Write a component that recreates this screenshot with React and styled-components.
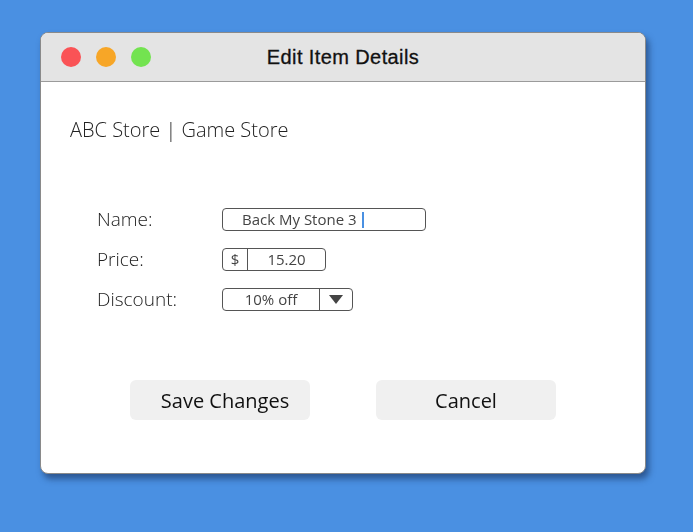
import React from 'react'
import styled, { createGlobalStyle } from 'styled-components'

const GlobalStyle = createGlobalStyle`
  html, body {
    margin: 0;
    padding: 0;
    background: #4a90e2;
  }
  body {
    font-family: 'Open Sans', 'Liberation Sans', sans-serif;
    -webkit-font-smoothing: antialiased;
  }
`

const Page = styled.div`
  width: 693px;
  height: 532px;
  padding: 32px 0 0 40px;
  box-sizing: border-box;
`

const Window = styled.div`
  width: 606px;
  height: 442px;
  box-sizing: border-box;
  background: #fff;
  border: 1px solid #8a8a8a;
  border-radius: 8px;
  overflow: hidden;
  box-shadow: 3px 5px 6px rgba(20, 40, 80, 0.55);
  display: flex;
  flex-direction: column;
`

const TitleBar = styled.div`
  height: 48px;
  flex: none;
  background: #e4e4e4;
  border-bottom: 1px solid #9b9b9b;
  display: grid;
  grid-template-columns: 1fr auto 1fr;
  align-items: center;
`

const Lights = styled.div`
  display: flex;
  gap: 15px;
  padding-left: 20px;
`

const Light = styled.span`
  width: 20px;
  height: 20px;
  border-radius: 50%;
  background: ${({ color }) => color};
`

const Title = styled.div`
  font-family: 'Liberation Sans', Arial, sans-serif;
  font-size: 20px;
  letter-spacing: 0.4px;
  color: #111;
  -webkit-text-stroke: 0.3px #111;
`

const Body = styled.div`
  padding: 34px 0 0 29px;
  will-change: transform;
`

const Store = styled.div`
  font-size: 20px;
  font-weight: 300;
  color: #222;
  line-height: 28px;
`

const Form = styled.div`
  margin: 64px 0 0 27px;
  display: grid;
  grid-template-columns: 125px auto;
  row-gap: 17px;
  align-items: center;
  justify-items: start;
`

const Label = styled.div`
  font-size: 19px;
  font-weight: 300;
  color: #222;
  line-height: 23px;
`

const Field = styled.div`
  display: flex;
  align-items: stretch;
  width: ${({ w }) => w}px;
  height: 23px;
  box-sizing: border-box;
  border: 1px solid #555;
  border-radius: 4px;
  font-size: 15px;
  color: #444;
  line-height: 21px;
`

const Cell = styled.div`
  flex: ${({ grow }) => (grow ? 1 : 'none')};
  width: ${({ w }) => (w ? `${w}px` : 'auto')};
  padding-left: ${({ pad }) => pad || 0}px;
  border-left: ${({ divided }) => (divided ? '1px solid #555' : 'none')};
  display: flex;
  align-items: center;
  justify-content: ${({ left }) => (left ? 'flex-start' : 'center')};
`

const Caret = styled.span`
  display: inline-block;
  width: 2px;
  height: 16px;
  background: #4a90e2;
  margin-left: 5px;
`

const Buttons = styled.div`
  display: flex;
  gap: 66px;
  margin: 69px 0 0 60px;
`

const Button = styled.button`
  width: 180px;
  height: 40px;
  border: none;
  border-radius: 6px;
  background: #f0f0f0;
  font-family: 'Open Sans', sans-serif;
  font-size: 20px;
  color: #111;
  padding: 0 0 0 ${({ shift }) => shift || 0}px;
`

export default function App() {
  return (
    <Page>
      <GlobalStyle />
      <Window>
        <TitleBar>
          <Lights>
            <Light color="#fa5356" />
            <Light color="#f7a627" />
            <Light color="#73e350" />
          </Lights>
          <Title>Edit Item Details</Title>
          <div />
        </TitleBar>
        <Body>
          <Store>ABC Store | Game Store</Store>
          <Form>
            <Label>Name:</Label>
            <Field w={204}>
              <Cell grow left pad={19}>
                Back My Stone 3<Caret />
              </Cell>
            </Field>
            <Label>Price:</Label>
            <Field w={104}>
              <Cell w={24}>$</Cell>
              <Cell grow divided>15.20</Cell>
            </Field>
            <Label>Discount:</Label>
            <Field w={131}>
              <Cell grow>10% off</Cell>
              <Cell w={32} divided>
                <svg width="16" height="11" viewBox="0 0 16 11">
                  <path d="M1 1h14L8 10z" fill="#444" />
                </svg>
              </Cell>
            </Field>
          </Form>
          <Buttons>
            <Button shift={10}>Save Changes</Button>
            <Button>Cancel</Button>
          </Buttons>
        </Body>
      </Window>
    </Page>
  )
}
